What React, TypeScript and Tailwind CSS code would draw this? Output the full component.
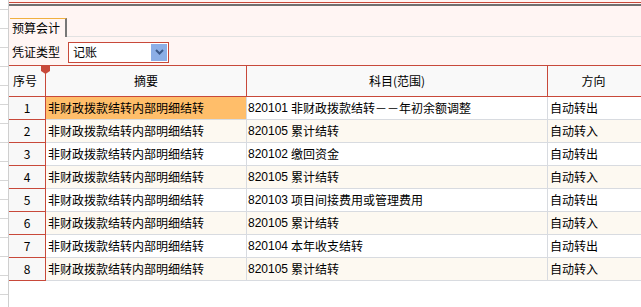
import type React from "react"

const rows = [
  { no: 1, code: "820101", name: "非财政拨款结转－－年初余额调整", dir: "自动转出" },
  { no: 2, code: "820105", name: "累计结转", dir: "自动转入" },
  { no: 3, code: "820102", name: "缴回资金", dir: "自动转出" },
  { no: 4, code: "820105", name: "累计结转", dir: "自动转入" },
  { no: 5, code: "820103", name: "项目间接费用或管理费用", dir: "自动转出" },
  { no: 6, code: "820105", name: "累计结转", dir: "自动转入" },
  { no: 7, code: "820104", name: "本年收支结转", dir: "自动转出" },
  { no: 8, code: "820105", name: "累计结转", dir: "自动转入" },
]

export default function App(): React.ReactElement {
  return (
    <div className="flex h-[307px] w-[641px] overflow-hidden bg-white font-['Noto_Sans_CJK_SC',sans-serif] text-[12px] leading-none text-black">
      {/* strip of the panel behind */}
      <div className="flex w-[9px] shrink-0 flex-col border-r border-[#cfcfcf] pt-[9px]">
        {Array.from({ length: 16 }).map((_, i) => (
          <div key={i} className="h-[19px] shrink-0 border-t border-[#d6d6d6]" />
        ))}
      </div>

      <div className="flex min-w-0 flex-1 flex-col">
        {/* top edge */}
        <div className="h-[2px] bg-[#fff5f3]" />
        <div className="h-px bg-[#c8493a]" />
        <div className="h-px bg-[#fff5f3]" />
        <div className="h-[2px] bg-[#707070]" />

        {/* tabs */}
        <div className="flex h-[31px] items-end bg-[#fff5f3]">
          <div className="ml-px flex h-[19px] w-[57px] items-center border-t border-r-2 border-t-[#f0b040] border-r-[#777777] pl-[2px]">
            预算会计
          </div>
          <div className="h-px flex-1 bg-[#e2e2e2]" />
        </div>

        {/* toolbar */}
        <div className="flex h-[28px] items-center bg-[#fff5f3] pl-[3px]">
          <span className="mt-[2px]">凭证类型</span>
          <div className="ml-[8px] mt-[2px] flex h-[21px] w-[101px] items-center border border-[#c8493a] bg-white pl-[4px]">
            <span className="flex-1">记账</span>
            <div className="mr-px flex h-[17px] w-[16px] items-center justify-center bg-[#8caee6]">
              <svg width="9" height="6" viewBox="0 0 9 6">
                <path d="M1 1 L4.5 4.5 L8 1" fill="none" stroke="#3c5a8c" strokeWidth="2" />
              </svg>
            </div>
          </div>
        </div>

        {/* table */}
        <div className="relative flex h-[32px] border-y border-[#c8493a] bg-[#f9f9f9]">
          <div className="flex w-[37px] shrink-0 items-center border-r border-[#c8493a] pl-[4px]">序号</div>
          <div className="flex w-[201px] shrink-0 items-center justify-center border-r border-[#c8493a]">摘要</div>
          <div className="flex w-[301px] shrink-0 items-center justify-center border-r border-[#c8493a]">科目(范围)</div>
          <div className="flex flex-1 items-center justify-center pr-[2px]">方向</div>
          <svg className="absolute left-[32px] top-0" width="9" height="8" viewBox="0 0 9 8">
            <path d="M0 0 H9 V5 L4.5 8 L0 5 Z" fill="#c8493a" />
          </svg>
        </div>

        {rows.map((r, i) => {
          const bg = i % 2 === 1 ? "bg-[#fdf9f1]" : "bg-white"
          return (
            <div key={r.no} className="flex h-[23px]">
              <div className="flex w-[37px] shrink-0 items-center justify-center border-r border-b border-[#c8493a] bg-[#f8f8f8]">
                {r.no}
              </div>
              <div
                className={`flex w-[201px] shrink-0 items-center border-r border-b border-[#d8dbe0] pl-[2px] ${
                  i === 0 ? "bg-[#ffbe6a]" : bg
                }`}
              >
                非财政拨款结转内部明细结转
              </div>
              <div className={`flex w-[301px] shrink-0 items-center border-r border-b border-[#d8dbe0] pl-[1px] ${bg}`}>
                <span className="w-[43px] font-['Liberation_Sans',sans-serif]">{r.code}</span>
                <span>{r.name}</span>
              </div>
              <div className={`flex flex-1 items-center border-b border-[#d8dbe0] pl-[2px] ${bg}`}>{r.dir}</div>
            </div>
          )
        })}
      </div>
    </div>
  )
}
